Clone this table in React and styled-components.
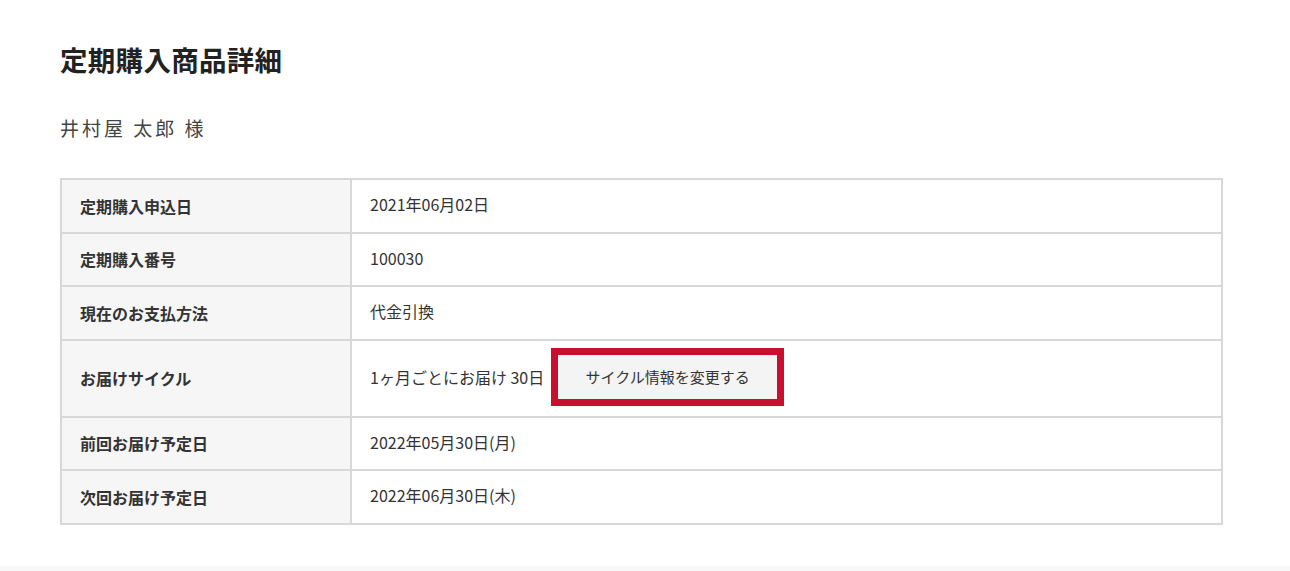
import React from 'react';
import styled, { createGlobalStyle } from 'styled-components';

const GlobalStyle = createGlobalStyle`
  html, body {
    margin: 0;
    padding: 0;
    background: #ffffff;
  }
  body {
    font-family: "Noto Sans CJK JP", "Noto Sans", sans-serif;
    color: #333;
  }
`;

const rows = [
  { label: '定期購入申込日', value: '2021年06月02日' },
  { label: '定期購入番号', value: '100030' },
  { label: '現在のお支払方法', value: '代金引換' },
  { label: 'お届けサイクル', value: '1ヶ月ごとにお届け 30日', action: 'サイクル情報を変更する' },
  { label: '前回お届け予定日', value: '2022年05月30日(月)' },
  { label: '次回お届け予定日', value: '2022年06月30日(木)' },
];

const App = () => {
  return (
    <Page>
      <GlobalStyle />
      <Title>定期購入商品詳細</Title>
      <CustomerName>井村屋 太郎 様</CustomerName>
      <DetailTable>
        <tbody>
          {rows.map((row) => (
            <tr key={row.label}>
              <LabelCell tall={!!row.action}>{row.label}</LabelCell>
              <ValueCell>
                <ValueInner>
                  <span>{row.value}</span>
                  {row.action && <ChangeButton type="button">{row.action}</ChangeButton>}
                </ValueInner>
              </ValueCell>
            </tr>
          ))}
        </tbody>
      </DetailTable>
      <BottomBand />
    </Page>
  );
};

const Page = styled.div`
  width: 1290px;
  height: 571px;
  box-sizing: border-box;
  padding: 40px 0 0 60px;
  position: relative;
  overflow: hidden;
`;

const Title = styled.h1`
  margin: 0;
  font-size: 27.5px;
  font-weight: 700;
  line-height: 38px;
  color: #222;
  letter-spacing: 0.3px;
`;

const CustomerName = styled.p`
  margin: 36px 0 0;
  font-size: 19px;
  line-height: 28px;
  color: #444;
  letter-spacing: 3px;
`;

const DetailTable = styled.table`
  margin-top: 36px;
  width: 1163px;
  border-collapse: collapse;
  border: 2px solid #d4d4d4;
  font-size: 16px;
  color: #333;
`;

const LabelCell = styled.th`
  width: 290px;
  height: ${(p) => (p.tall ? '77px' : '53.5px')};
  box-sizing: border-box;
  padding: 0 18px;
  text-align: left;
  font-weight: 700;
  background: #f6f6f6;
  border: 2px solid #d8d8d8;
`;

const ValueCell = styled.td`
  padding: 0 18px;
  border: 2px solid #d8d8d8;
  background: #fff;
`;

const ValueInner = styled.div`
  display: flex;
  align-items: center;
  gap: 7px;
  padding-bottom: 3px;
`;

const ChangeButton = styled.button`
  width: 233px;
  height: 58px;
  box-sizing: border-box;
  border: 7px solid #c8102e;
  background: #f4f4f4;
  font-family: "Noto Sans CJK JP", "Noto Sans", sans-serif;
  font-size: 15px;
  color: #333;
  cursor: pointer;
  padding: 0;
`;

const BottomBand = styled.div`
  position: absolute;
  left: 0;
  right: 0;
  bottom: 0;
  height: 5px;
  background: #f8f8f8;
`;

export default App;
